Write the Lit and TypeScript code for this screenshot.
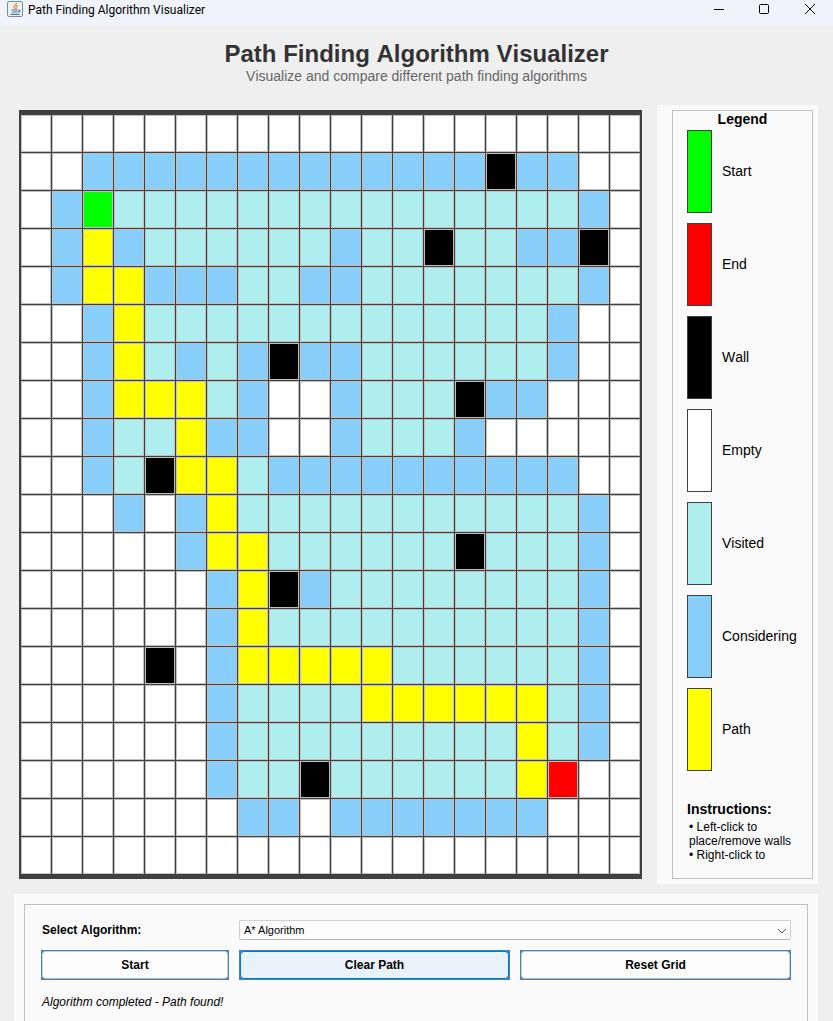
import { LitElement, html, css } from 'lit';
import { customElement, state } from 'lit/decorators.js';
import { classMap } from 'lit/directives/class-map.js';

type Kind = 'start' | 'end' | 'wall' | 'empty' | 'visited' | 'considering' | 'path';

const KINDS: Record<string, Kind> = {
  S: 'start',
  E: 'end',
  W: 'wall',
  '.': 'empty',
  v: 'visited',
  c: 'considering',
  p: 'path',
};

const MAP = [
  '....................',
  '..cccccccccccccWcc..',
  '.cSvvvvvvvvvvvvvvvc.',
  '.cpcvvvvvvcvvWvvccW.',
  '.cppcccvvccvvvvvvvc.',
  '..cpvvvvvvvvvvvvvc..',
  '..cpvcvcWccvvvvvvc..',
  '..cpppvc..cvvvWcc...',
  '..cvvpcc..cvvvc.....',
  '..cvWppvcccccccccc..',
  '...c.cpvvvvvvvvvvvc.',
  '.....cppvvvvvvWvvvc.',
  '......cpWcvvvvvvvvc.',
  '......cpvvvvvvvvvvc.',
  '....W.cpppppvvvvvvc.',
  '......cvvvvppppppvc.',
  '......cvvvvvvvvvpvc.',
  '......cvvWvvvvvvpE..',
  '.......cc.ccccccc...',
  '....................',
];

const LEGEND: [Kind, string][] = [
  ['start', 'Start'],
  ['end', 'End'],
  ['wall', 'Wall'],
  ['empty', 'Empty'],
  ['visited', 'Visited'],
  ['considering', 'Considering'],
  ['path', 'Path'],
];

@customElement('app-root')
export class AppRoot extends LitElement {
  static styles = css`
    :host {
      display: flex;
      flex-direction: column;
      min-height: 100vh;
      background: #efefef;
      color: #000;
      font-family: 'Liberation Sans', Arial, sans-serif;
      font-kerning: none;
    }
    * {
      box-sizing: border-box;
    }
    .titlebar {
      display: flex;
      align-items: flex-start;
      height: 25px;
      padding-left: 7px;
      background: #f0f3fb;
      font: 12px/20px Roboto, 'Noto Sans', sans-serif;
    }
    .titlebar .java {
      width: 16px;
      height: 17px;
      margin-right: 5px;
    }
    .titlebar .name {
      flex: 1;
    }
    .winbtn {
      width: 46px;
      height: 18px;
      padding: 0;
      border: 0;
      background: none;
      display: flex;
      align-items: center;
      justify-content: center;
    }
    .heading {
      padding: 15px 0 20px;
      text-align: center;
    }
    h1 {
      margin: 0;
      font-size: 24px;
      line-height: 28px;
      color: #333;
    }
    .subtitle {
      margin: 0;
      font-size: 14px;
      line-height: 17px;
      color: #666;
    }
    .main {
      display: flex;
      gap: 15px;
      padding: 0 15px 10px 19px;
    }
    .grid {
      flex: 1;
      margin: 5px 0;
      display: grid;
      grid-template-columns: repeat(20, 1fr);
      grid-auto-rows: 37px;
      gap: 1px;
      padding: 5px 2px;
      background: #404040;
    }
    .cell {
      border: 1px solid #c0c0c0;
    }
    .start {
      background: #0f0;
    }
    .end {
      background: #f00;
    }
    .wall {
      background: #000;
    }
    .empty {
      background: #fff;
    }
    .visited {
      background: #afeeee;
    }
    .considering {
      background: #87cefa;
    }
    .path {
      background: #ff0;
    }
    .side {
      width: 161px;
      padding: 5px 5px 5px 15px;
      background: #fafafa;
    }
    .frame {
      height: 100%;
      border: 1px solid #c0c0c0;
      display: flex;
      flex-direction: column;
      padding: 0 14px;
    }
    h2 {
      margin: 0;
      font-size: 14px;
      line-height: 17px;
    }
    .legend-title {
      text-align: center;
      margin-bottom: 2px;
    }
    .legend {
      list-style: none;
      margin: 0;
      padding: 0;
      display: grid;
      gap: 10px;
      font-size: 14px;
    }
    .item {
      display: flex;
      align-items: center;
      gap: 10px;
    }
    .item-label {
      padding-bottom: 2px;
    }
    .swatch {
      width: 25px;
      height: 83px;
      border: 1px solid #404040;
    }
    .instr-title {
      margin-top: 30px;
    }
    .instr {
      margin: 2px 0 0;
      padding-left: 2px;
      font-size: 12px;
      line-height: 14px;
      white-space: nowrap;
    }
    .controls {
      flex: 1;
      display: flex;
      margin: 0 15px 0 14px;
      padding: 10px 10px 0;
      background: #fafafa;
    }
    .panel {
      flex: 1;
      border: 1px solid #c0c0c0;
      border-bottom: 0;
      padding: 15px 16px 0;
      font-size: 12px;
    }
    .form {
      display: grid;
      grid-template-columns: 188fr 271fr 271fr;
      column-gap: 10px;
      row-gap: 10px;
      align-items: center;
    }
    .label {
      font-weight: bold;
      padding-left: 1px;
    }
    .pick {
      grid-column: 2 / 4;
      position: relative;
      display: flex;
    }
    .pick svg {
      position: absolute;
      right: 4px;
      top: 8px;
      pointer-events: none;
    }
    select {
      appearance: none;
      width: 100%;
      height: 20px;
      border: 1px solid #d0d0d0;
      border-bottom-color: #b8b8b8;
      border-radius: 2px;
      padding: 0 4px;
      background: #fdfdfd;
      color: #000;
      font: 11px 'Liberation Sans', Arial, sans-serif;
    }
    .shell {
      display: flex;
      height: 30px;
      padding: 1px;
      background: #4682b4;
    }
    .btn {
      flex: 1;
      border: 1px solid #d0d0d0;
      border-bottom-color: #b8b8b8;
      border-radius: 4px;
      background: #fdfdfd;
      color: #000;
      font: bold 12px 'Liberation Sans', Arial, sans-serif;
      padding: 0;
    }
    .btn.hot {
      border-color: #0078d4;
      background: #e8f2fb;
    }
    .status {
      margin: 15px 0 0;
      padding-left: 1px;
      font-style: italic;
      line-height: 14px;
    }
  `;

  @state() private hot = 'Clear Path';

  private button(label: string) {
    return html`<div class="shell">
      <button class=${classMap({ btn: true, hot: this.hot === label })}>${label}</button>
    </div>`;
  }

  render() {
    return html`
      <header class="titlebar">
        <svg class="java" viewBox="0 0 16 17">
          <rect x=".5" y="1.5" width="15" height="15" rx="1.5" fill="#eef1f4" stroke="#6f8fa6" />
          <path d="M9.5 3C10 5 6 5.500 7 7.500L8 9M11 5.500C9 6.500 8.500 7 9.300 9" fill="none" stroke="#e8852c" stroke-width="1.300" />
          <path d="M4.500 10h7M12 10c2 0 1 2-1 2M5 12h5.500M3.500 14.300h9" fill="none" stroke="#4c789b" stroke-width="1.200" />
        </svg>
        <span class="name">Path Finding Algorithm Visualizer</span>
        <button class="winbtn" aria-label="Minimize">
          <svg width="12" height="12"><path d="M2 6.500h10" stroke="#000" /></svg>
        </button>
        <button class="winbtn" aria-label="Maximize">
          <svg width="12" height="12"><rect x="1.500" y="1.500" width="9" height="9" rx="1" fill="none" stroke="#000" /></svg>
        </button>
        <button class="winbtn" aria-label="Close">
          <svg width="12" height="12"><path d="M1 1l10 10M11 1L1 11" stroke="#000" /></svg>
        </button>
      </header>
      <div class="heading">
        <h1>Path Finding Algorithm Visualizer</h1>
        <p class="subtitle">Visualize and compare different path finding algorithms</p>
      </div>
      <main class="main">
        <div class="grid">
          ${MAP.flatMap((row) => [...row].map((c) => html`<div class="cell ${KINDS[c]}"></div>`))}
        </div>
        <aside class="side">
          <div class="frame">
            <h2 class="legend-title">Legend</h2>
            <ul class="legend">
              ${LEGEND.map(
                ([kind, label]) => html`<li class="item">
                  <span class="swatch ${kind}"></span><span class="item-label">${label}</span>
                </li>`
              )}
            </ul>
            <h2 class="instr-title">Instructions:</h2>
            <p class="instr">• Left-click to<br />place/remove walls<br />• Right-click to</p>
          </div>
        </aside>
      </main>
      <section class="controls">
        <div class="panel">
          <div class="form">
            <label class="label" for="algo">Select Algorithm:</label>
            <div class="pick">
              <select id="algo">
                <option>A* Algorithm</option>
              </select>
              <svg width="10" height="6"><path d="M1 1l4 4 4-4" fill="none" stroke="#555" /></svg>
            </div>
            ${this.button('Start')} ${this.button('Clear Path')} ${this.button('Reset Grid')}
          </div>
          <p class="status">Algorithm completed - Path found!</p>
        </div>
      </section>
    `;
  }
}
